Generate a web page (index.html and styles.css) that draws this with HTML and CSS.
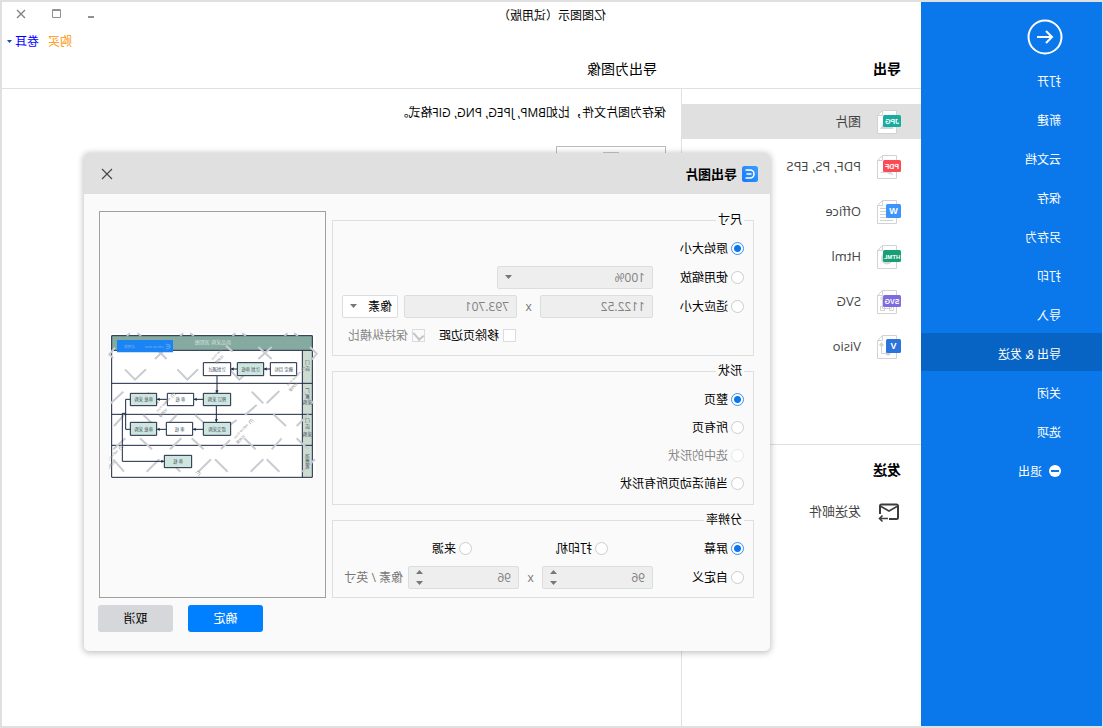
FILE: index.html
```html
<!DOCTYPE html>
<html lang="zh-CN">
<head>
<meta charset="utf-8">
<title>亿图图示（试用版）</title>
<link rel="stylesheet" href="styles.css">
</head>
<body>
<div class="app">
  <nav class="sidebar">
    <button class="back" aria-label="返回">
      <svg width="36" height="36" viewBox="0 0 36 36" fill="none" stroke="#fff" stroke-width="2"><circle cx="18" cy="18" r="16.500"/><path d="M26 18H11M17 12l-6 6 6 6"/></svg>
    </button>
    <a class="menu" href="#">打开</a>
    <a class="menu" href="#">新建</a>
    <a class="menu" href="#">云文档</a>
    <a class="menu" href="#">保存</a>
    <a class="menu" href="#">另存为</a>
    <a class="menu" href="#">打印</a>
    <a class="menu" href="#">导入</a>
    <a class="menu active" href="#">导出 &amp; 发送</a>
    <a class="menu" href="#">关闭</a>
    <a class="menu" href="#">选项</a>
    <a class="menu" href="#"><svg width="12" height="12" viewBox="0 0 12 12"><circle cx="6" cy="6" r="6" fill="#fff"/><path d="M2 6h8" stroke="#0a77eb" stroke-width="2"/></svg>退出</a>
  </nav>
  <div class="main">
    <header class="top">
      <div class="titlebar">
        <span class="title">亿图图示（试用版）</span>
        <div class="winbtns">
          <button aria-label="最小化"><svg width="10" height="10" viewBox="0 0 10 10"><path d="M2 8h6" stroke="#919191" stroke-width="2"/></svg></button>
          <button aria-label="最大化"><svg width="10" height="10" viewBox="0 0 10 10"><path d="M.5.5h8v8h-8zM1 1.500h8" fill="none" stroke="#919191"/></svg></button>
          <button aria-label="关闭窗口"><svg width="10" height="10" viewBox="0 0 10 10"><path d="M1 1l8 8M9 1L1 9" stroke="#808080" stroke-width="1.300"/></svg></button>
        </div>
      </div>
      <div class="account">
        <a class="buy" href="#">购买</a>
        <a class="user" href="#">卷耳<svg width="5" height="3" viewBox="0 0 5 3"><path d="M0 0h5L2.500 3z" fill="#0a50b4"/></svg></a>
      </div>
      <div class="heads"><h2>导出</h2><h1>导出为图像</h1></div>
    </header>
    <div class="content">
      <div class="formats">
        <a class="format active" href="#">
          <svg width="24" height="24" viewBox="0 0 24 24"><path d="M4.500.5h14l5 5v18h-19z" fill="#fff" stroke="#d2d2d2"/><path d="M18.500.5v5h5" fill="none" stroke="#d2d2d2"/><path d="M7 19l5-6 3 3 3-2 3 5z" fill="#d6d6d6"/><rect y="5" width="18" height="12" rx="1.500" fill="#16ada0"/><text x="9" y="14" class="tag">JPG</text></svg>图片</a>
        <a class="format" href="#">
          <svg width="24" height="24" viewBox="0 0 24 24"><path d="M4.500.5h14l5 5v18h-19z" fill="#fff" stroke="#d2d2d2"/><path d="M18.500.5v5h5" fill="none" stroke="#d2d2d2"/><path d="M8 20c0-3 4-3 6-6 3 3 5 2 7 4-4 0-7-1-9 1z" fill="#d6d6d6"/><rect y="5" width="18" height="12" rx="1.500" fill="#fb4b55"/><text x="9" y="14" class="tag">PDF</text></svg>PDF, PS, EPS</a>
        <a class="format" href="#">
          <svg width="24" height="24" viewBox="0 0 24 24"><path d="M4.500.5h14l5 5v18h-19z" fill="#fff" stroke="#d2d2d2"/><path d="M18.500.5v5h5M14 8.500h7M14 11.500h7M14 14.500h7M14 17.500h7M8 20.500h13" fill="none" stroke="#d2d2d2"/><rect y="4" width="15" height="14" rx="1.500" fill="#3b95fb"/><text x="7.500" y="14" class="tag big">W</text></svg>Office</a>
        <a class="format" href="#">
          <svg width="24" height="24" viewBox="0 0 24 24"><path d="M4.500.5h14l5 5v18h-19z" fill="#fff" stroke="#d2d2d2"/><path d="M18.500.5v5h5" fill="none" stroke="#d2d2d2"/><circle cx="14" cy="13.500" r="6" fill="#d6d6d6"/><rect y="5" width="18" height="12" rx="1.500" fill="#17a078"/><text x="9" y="14" class="tag small">HTML</text></svg>Html</a>
        <a class="format" href="#">
          <svg width="24" height="24" viewBox="0 0 24 24"><path d="M4.500.5h14l5 5v18h-19z" fill="#fff" stroke="#d2d2d2"/><path d="M18.500.5v5h5M9.500 7.500h9v11h-9zM7.500 16.500h4v4h-4zM16.500 16.500h4v4h-4zM17 7h3v3" fill="none" stroke="#d2d2d2"/><rect y="5" width="18" height="12" rx="1.500" fill="#7f6be0"/><text x="9" y="14" class="tag">SVG</text></svg>SVG</a>
        <a class="format" href="#">
          <svg width="24" height="24" viewBox="0 0 24 24"><path d="M4.500.5h14l5 5v18h-19z" fill="#fff" stroke="#d2d2d2"/><path d="M18.500.5v5h5M19.500 10v8.500h-8" fill="none" stroke="#d2d2d2"/><path d="M19.500 7l2.500 3-2.500 2-2.500-2z" fill="#d2d2d2"/><circle cx="13" cy="18" r="2.500" fill="#d2d2d2"/><rect y="4" width="15" height="14" rx="1.500" fill="#2a74da"/><text x="7.500" y="14" class="tag big">V</text></svg>Visio</a>
        <div class="send">
          <h2>发送</h2>
          <a class="format" href="#"><svg width="24" height="24" viewBox="0 0 24 24" fill="none" stroke="#3c3c3c" stroke-width="2"><path d="M12 19H4.500a1.500 1.500 0 0 1-1.500-1.500V6a1.500 1.500 0 0 1 1.500-1.500h15A1.500 1.500 0 0 1 21 6v8"/><path d="M4 6.500l8 4.500 8-4.500M13 18.500h8M18.500 15.500l3 3-3 3" stroke-width="1.600"/></svg>发送邮件</a>
        </div>
      </div>
      <div class="detail">
        <p>保存为图片文件，比如BMP, JPEG, PNG, GIF格式。</p>
        <button class="big-export" aria-label="图片格式"><svg width="16" height="16" viewBox="0 0 16 16"><path d="M0 .5h16v15H0z" fill="#fff" stroke="#c8c8c8"/></svg></button>
      </div>
    </div>
  </div>

  <section class="dialog" role="dialog" aria-label="导出图片">
    <header class="dialog-head">
      <svg width="16" height="16" viewBox="0 0 16 16"><defs><linearGradient id="lg" x1="0" y1="0" x2="1" y2="1"><stop offset="0" stop-color="#3ba0fb"/><stop offset="1" stop-color="#1677ff"/></linearGradient></defs><rect width="16" height="16" rx="2.500" fill="url(#lg)"/><path d="M12.500 4H8a4 4 0 0 0 0 8h4.500M6.500 8h5" fill="none" stroke="#fff" stroke-width="1.600"/></svg>
      <h3>导出图片</h3>
      <button class="close" aria-label="关闭"><svg width="12" height="12" viewBox="0 0 12 12"><path d="M1 1l10 10M11 1L1 11" stroke="#444" stroke-width="1.100"/></svg></button>
    </header>
    <div class="dialog-body">
      <form class="options">
        <fieldset>
          <legend>尺寸</legend>
          <div class="row"><label class="choice first"><input type="radio" name="size" checked>原始大小</label></div>
          <div class="row"><label class="choice first"><input type="radio" name="size">使用缩放</label>
            <span class="pick scale"><select disabled aria-label="缩放"><option>100%</option></select><svg class="caret" width="7" height="4" viewBox="0 0 7 4"><path d="M0 0h7L3.500 4z"/></svg></span></div>
          <div class="row"><label class="choice first"><input type="radio" name="size">适应大小</label>
            <input class="box wide" type="text" value="1122.52" disabled aria-label="宽度"><span class="times">x</span><input class="box wide" type="text" value="793.701" disabled aria-label="高度">
            <span class="pick unit"><select aria-label="单位"><option>像素</option></select><svg class="caret" width="7" height="4" viewBox="0 0 7 4"><path d="M0 0h7L3.500 4z"/></svg></span></div>
          <div class="row checks"><label class="choice"><input type="checkbox">移除页边距</label><label class="choice off"><input type="checkbox" checked disabled>保持纵横比</label></div>
        </fieldset>
        <fieldset class="shapes">
          <legend>形状</legend>
          <div class="row"><label class="choice"><input type="radio" name="shape" checked>整页</label></div>
          <div class="row"><label class="choice"><input type="radio" name="shape">所有页</label></div>
          <div class="row"><label class="choice off"><input type="radio" name="shape" disabled>选中的形状</label></div>
          <div class="row"><label class="choice"><input type="radio" name="shape">当前活动页所有形状</label></div>
        </fieldset>
        <fieldset>
          <legend>分辨率</legend>
          <div class="row thirds"><label class="choice"><input type="radio" name="dpi" checked>屏幕</label><label class="choice"><input type="radio" name="dpi">打印机</label><label class="choice"><input type="radio" name="dpi">来源</label></div>
          <div class="row"><label class="choice first"><input type="radio" name="dpi">自定义</label>
            <span class="pick spin"><input class="box" type="text" value="96" disabled aria-label="水平分辨率"><svg class="caret" width="7" height="15" viewBox="0 0 7 15"><path d="M0 4h7L3.500 0zM0 11h7L3.500 15z"/></svg></span><span class="times">x</span><span class="pick spin"><input class="box" type="text" value="96" disabled aria-label="垂直分辨率"><svg class="caret" width="7" height="15" viewBox="0 0 7 15"><path d="M0 4h7L3.500 0zM0 11h7L3.500 15z"/></svg></span>
            <span class="per">像素 / 英寸</span></div>
        </fieldset>
      </form>
      <div class="preview">
        <svg width="225" height="160" viewBox="0 0 675 480">
          <defs><clipPath id="page"><path d="M25 22h623v440H25z"/></clipPath></defs>
          <path d="M25 22h623v440H25z" fill="#fff" stroke="#eee"/>
          <path d="M38 76h30v381H38z" fill="#ccdcd0"/>
          <path d="M38 32h602v44H38z" fill="#85aaa0"/>
          <g fill="none" stroke="#1a2740" stroke-width="3"><path d="M38 32h602v425H38zM38 76h602M68 76v381M38 175h602M38 268h602M38 361h602"/></g>
          <g class="mark"><path d="M45 68L28 88l12 12M165 68l35 34M200 68l-35 34M475 66l40 36M515 66l-40 36M630 66l20 20-14 18M378 62l20 18M75 133l30 31 33-31M232 133l30 31 32-31M388 133l30 31 32-31M70 200l-38 35M143 203l32 32M220 210l-25 25M345 200l37 35M455 200l35 35M538 198l-38 37M610 200l30 35M470 240l-35 30M130 270l35 33M72 270l-30 33M230 270l-32 33M285 270l38 33M410 285l-28 20M520 268l38 35M625 268l-35 35M120 340l36 33M76 340l-36 33M244 340l-34 33M275 340l36 33M390 345l-27 27M433 340l34 33M545 340l-30 33M590 340l34 33M40 403l32 37M178 403l-38 37M205 405l36 35M333 403l-38 37M345 403l38 37M490 403l-38 37M500 403l38 37M645 403l-38 37M80 32l10-7M112 25l12 7M240 32l10-7M270 25l12 7M397 32l10-7M426 25l12 7M553 32l10-7M582 25l12 7"/></g>
          <g fill="none" stroke="#1a2740" stroke-width="3"><path d="M164 132h20M263 132h20M324 152v53M326 242v50M365 223h29M473 223h32M365 313h32M476 313h29M584 223h14v90h-14M598 265h10v144H482"/></g>
          <path d="M175 127l8 5-8 5zM274 127l8 5-8 5zM319 196h10l-5 8zM321 283h10l-5 8zM385 218l8 5-8 5zM496 218l8 5-8 5zM388 308l8 5-8 5zM496 308l8 5-8 5zM491 404l-8 5 8 5z" fill="#1a2740"/>
          <g stroke="#1a2740" stroke-width="3"><g fill="#fff"><path d="M85 113h79v39H85zM283 113h82v39h-82zM394 205h79v37h-79zM397 292h79v39h-79z"/></g><g fill="#cfe6de"><path d="M184 113h79v39h-79zM283 205h82v37h-82zM505 205h79v37h-79zM283 292h82v39h-82zM505 292h79v39h-79zM400 391h82v37h-82z"/></g></g>
          <g class="node"><text x="124" y="138">确定 目标</text><text x="223" y="138">计划 审核</text><text x="324" y="138">计划通过</text><text x="324" y="229">预订 采购</text><text x="434" y="229">审 核</text><text x="544" y="229">审批 采购</text><text x="324" y="319">提交采购</text><text x="436" y="319">审 核</text><text x="544" y="319">审批 采购</text><text x="441" y="415">审 核</text></g>
          <g class="lane"><text x="53" y="118">门<tspan x="53" dy="18">店</tspan></text><text x="53" y="200">厂<tspan x="53" dy="18">家</tspan><tspan x="53" dy="20">采购</tspan></text><text x="53" y="292">门<tspan x="53" dy="18">店</tspan><tspan x="53" dy="22">采购</tspan></text><text x="53" y="398">消<tspan x="53" dy="15">费</tspan><tspan x="53" dy="15">者</tspan></text></g>
          <text x="336" y="58" class="chart-title">商品采购 流程图</text>
          <path d="M456 45h168v37H456z" fill="#1b84f5"/>
          <path d="M477 58h-6a6 6 0 0 0 0 13h6M466 64h10" fill="none" stroke="#86b8ee" stroke-width="2"/>
          <text x="484" y="69" class="badge">edraw max</text><text x="570" y="69" class="badge">试用版</text>
          <g class="stamp" clip-path="url(#page)">
            <g id="st"><g transform="translate(66 130) rotate(134) scale(1 -1)"><path d="M9-6H4a6 6 0 0 0 0 12h5M0 0h8" fill="none" stroke="#999" stroke-width="2"/></g><g transform="translate(66 130) rotate(46)"><text x="14" y="5">edraw max</text><text x="44" y="22">试用版</text></g></g>
            <use href="#st" x="391" y="78"/><use href="#st" x="158" y="157"/><use href="#st" x="548" y="235"/>
            <g transform="translate(302 62) rotate(46)"><text y="5">edraw max</text><text x="24" y="22">试用版</text></g>
            <g transform="translate(378 442) rotate(46)"><path d="M9-6H4a6 6 0 0 0 0 12h5M0 0h8" fill="none" stroke="#999" stroke-width="2"/></g>
          </g>
        </svg>
      </div>
    </div>
    <footer class="dialog-foot"><button class="ok">确定</button><button class="cancel">取消</button></footer>
  </section>
</div>
</body>
</html>
```
FILE: styles.css
```css
* { box-sizing: border-box; }
body {
  margin: 0;
  font: 12px/17px "Open Sans", "Noto Sans CJK SC", sans-serif;
  color: #000;
}
button, input, select { font: inherit; color: inherit; }
button { border: 0; padding: 0; background: none; }
a { color: inherit; text-decoration: none; }
h1, h2, h3, p { margin: 0; font-size: 14px; line-height: 20px; }
h1 { font-weight: 400; }

/* the whole window is shown mirrored */
.app {
  position: relative;
  display: flex;
  min-height: 100vh;
  border: 2px solid #e0e0e0;
  border-left-width: 1px;
  background: #fff;
  transform: scaleX(-1);
}

.sidebar { width: 181px; background: #0a77eb; color: #fff; }
.back { display: block; margin: 17px 0 5px 39px; }
.back svg { display: block; }
.menu {
  display: flex;
  align-items: center;
  gap: 7px;
  height: 38px;
  margin-bottom: 1px;
  padding: 4px 0 0 41px;
}
.menu.active { background: #0764c5; }

.main { flex: 1; display: flex; flex-direction: column; min-width: 0; }
.top { border-bottom: 1px solid #e0e0e0; }
.titlebar {
  display: flex;
  justify-content: space-between;
  align-items: center;
  height: 26px;
  padding: 0 14px 0 315px;
}
.winbtns { display: flex; gap: 25px; padding-bottom: 2px; }
.winbtns svg { display: block; }
.account {
  display: flex;
  justify-content: flex-end;
  gap: 9px;
  padding: 5px 5px 0 0;
  height: 24px;
}
.buy { color: #ff9100; }
.user { display: flex; align-items: center; height: 17px; gap: 3px; color: #00f; }
.heads {
  display: grid;
  grid-template-columns: 240px 1fr;
  padding: 7px 0 9px;
}
.heads h2 { padding-left: 20px; }
.heads h1 { padding-left: 24px; }

.content { flex: 1; display: grid; grid-template-columns: 240px 1fr; }
.formats { padding-top: 15px; border-right: 1px solid #e0e0e0; }
.format {
  display: flex;
  align-items: center;
  gap: 16px;
  height: 35px;
  margin-bottom: 10px;
  padding-left: 20px;
  font-size: 13px;
  color: #444;
}
.format.active { background: #e0e0e0; }
.tag { font: bold 7px "Liberation Sans", sans-serif; fill: #fff; text-anchor: middle; }
.tag.big { font-size: 9px; }
.tag.small { font-size: 6px; }
.send { margin-top: 80px; padding-top: 15px; border-top: 1px solid #e0e0e0; }
.send h2 { padding-left: 20px; margin-bottom: 14px; }
.detail { padding: 15px; }
.detail p { font-size: 12px; line-height: 17px; }
.big-export {
  display: flex;
  justify-content: center;
  width: 110px;
  height: 90px;
  margin-top: 25px;
  padding-top: 5px;
  border: 1px solid #bbb;
}

.dialog {
  position: absolute;
  left: 332px;
  top: 151px;
  width: 686px;
  border-radius: 5px;
  background: #fafafa;
  box-shadow: 0 1px 6px 1px rgba(0, 0, 0, 0.24);
}
.dialog-head {
  display: flex;
  align-items: center;
  gap: 5px;
  height: 41px;
  padding: 0 17px 0 12px;
  border-radius: 5px 5px 0 0;
  background: #e0e0e0;
}
.dialog-head h3 { font-size: 13px; }
.close { margin-left: auto; }
.close svg { display: block; }
.dialog-body {
  display: grid;
  grid-template-columns: 1fr 227px;
  gap: 6px;
  padding: 17px 15px 0 16px;
}
.options { display: grid; gap: 7px; padding-top: 1px; }
fieldset {
  min-width: 0;
  margin: 0;
  padding: 5px 9px;
  border: 1px solid #dfdfdf;
}
fieldset.shapes { padding: 5px 9px 7px; }
legend { height: 17px; padding: 0 2px; line-height: 16px; }
.row { display: flex; align-items: center; height: 29px; }
.shapes .row { height: 28px; }
.choice { display: flex; align-items: center; gap: 3px; white-space: nowrap; }
.choice.first { width: 91px; }
.choice.off { color: #888; }
.thirds { display: grid; grid-template-columns: 136px 136px 1fr; }
.checks { padding-left: 228px; gap: 14px; }
.checks .choice { gap: 4px; }

input[type="radio"], input[type="checkbox"] {
  appearance: none;
  flex: none;
  width: 13px;
  height: 13px;
  margin: 0;
  border: 1px solid #ccc;
  background: #fff;
}
input[type="checkbox"] { border-color: #dcdcdc; }
input[type="radio"] { border-radius: 50%; }
input[type="radio"]:checked {
  border-color: #3a92f0;
  background: radial-gradient(circle, #0a77eb 3px, #fff 4px);
}
input[type="radio"]:disabled { border-color: #e6e6e6; }
input[type="checkbox"]:disabled {
  display: grid;
  place-items: center;
  background: #fafafa;
}
input[type="checkbox"]:disabled::after {
  content: "";
  width: 5px;
  height: 8px;
  margin-bottom: 2px;
  border: solid #c4c4c4;
  border-width: 0 2px 2px 0;
  transform: rotate(40deg);
}

.box, .pick select {
  appearance: none;
  width: 100%;
  height: 23px;
  margin: 0;
  padding: 0 7px;
  border: 1px solid #dcdddf;
  border-radius: 2px;
  background: #fff;
}
.box:disabled, .pick select:disabled { background: #eee; color: #808080; opacity: 1; }
.box.wide { width: 113px; }
.pick { position: relative; display: flex; }
.pick .caret { position: absolute; right: 8px; top: 9px; fill: #777; }
.pick.scale { width: 156px; }
.pick.unit { width: 56px; margin-left: 6px; }
.pick.unit select { padding: 0 5px; }
.pick.spin { width: 111px; }
.pick.spin .caret { top: 4px; }
.times { width: 23px; text-align: center; color: #777; }
.per { margin-left: 5px; color: #777; white-space: nowrap; }

.preview {
  display: flex;
  align-items: center;
  justify-content: center;
  border: 1px solid #a0a0a0;
}
.mark { fill: none; stroke: #c9cbd1; stroke-width: 6; transform: translateX(675px) scaleX(-1); }
.node, .lane { font-size: 13px; text-anchor: middle; fill: #3c4a5c; }
.lane { font-size: 14px; }
.chart-title { font-size: 15px; text-anchor: middle; fill: #d5e0dc; }
.badge { font-size: 11px; fill: #7fb2ea; }
.stamp { font-size: 11px; fill: #999; }

.dialog-foot { display: flex; justify-content: flex-end; gap: 15px; padding: 7px 14px 19px; }
.dialog-foot button { width: 75px; height: 27px; border-radius: 3px; }
.ok { background: #0080ff; color: #fff; }
.cancel { background: #d5d7db; }
```
